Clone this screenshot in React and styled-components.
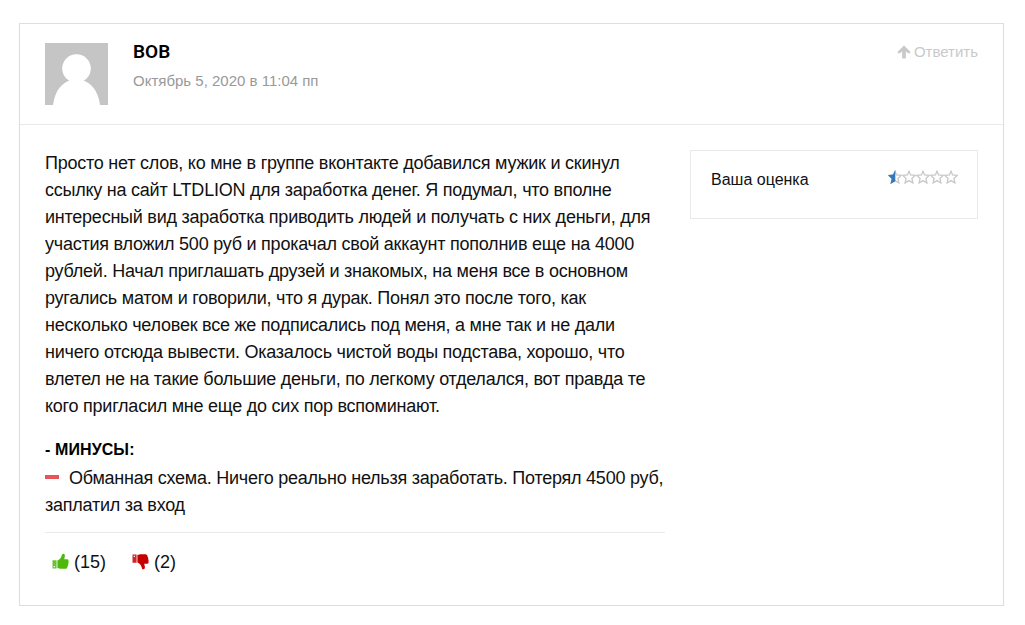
import React from 'react';
import styled, { createGlobalStyle } from 'styled-components';

const GlobalStyle = createGlobalStyle`
  * { box-sizing: border-box; }
  body { margin: 0; background: #fff; }
`;

const starPath = 'M7 1.3 L8.6 5 L13.2 5.4 L9.9 8.4 L10.9 13 L7 10.6 L3.1 13 L4.1 8.4 L0.8 5.4 L5.4 5 Z';

const Star = ({ half }) => (
  <svg width="14" height="15" viewBox="0 0 14 15">
    <path d={starPath} fill="none" stroke="#c8c8c8" strokeWidth="1.3" />
    {half && <path d="M7.3 0 V11.2 L2.5 14 L3.6 8.8 L0 5.2 L5 4.6 Z" fill="#3579bd" />}
  </svg>
);

const ArrowUp = () => (
  <svg width="14" height="14" viewBox="0 0 14 14" fill="currentColor">
    <path d="M7 0.4 L13.6 7 L12 8.7 L8.8 6.6 V13.6 H5.2 V6.6 L2 8.7 L0.4 7 Z" />
  </svg>
);

const Thumb = ({ down }) => (
  <svg width="17" height="17" viewBox="0 0 17 17" fill="currentColor">
    <g transform={down ? 'matrix(1 0 0 -1 0 17)' : undefined}>
      <path d="M0.5 7.2 H4.6 V15.5 H0.5 Z M1.7 12.9 V14.2 H3 V12.9 Z" fillRule="evenodd" opacity="0.85" />
      <path d="M5.4 7.6 C7.4 7 9 5.2 9.6 3.1 C9.9 1.7 10.1 0.8 11.3 0.8 C12.7 0.9 13.1 2.2 12.8 3.6 C12.7 4.7 12.3 5.5 12.2 6.2 H15.2 C16.5 6.2 16.9 7.3 16.4 8.4 C16.8 9.5 16.6 10.3 16.1 10.9 C16.4 12.1 16.1 12.8 15.5 13.2 C15.6 14.7 14.8 15.8 13.3 15.8 H9.7 C7.8 15.8 6.7 15.4 5.4 15.1 Z" />
    </g>
  </svg>
);

const lines = [
  'Просто нет слов, ко мне в группе вконтакте добавился мужик и скинул',
  'ссылку на сайт LTDLION для заработка денег. Я подумал, что вполне',
  'интересный вид заработка приводить людей и получать с них деньги, для',
  'участия вложил 500 руб и прокачал свой аккаунт пополнив еще на 4000',
  'рублей. Начал приглашать друзей и знакомых, на меня все в основном',
  'ругались матом и говорили, что я дурак. Понял это после того, как',
  'несколько человек все же подписались под меня, а мне так и не дали',
  'ничего отсюда вывести. Оказалось чистой воды подстава, хорошо, что',
  'влетел не на такие большие деньги, по легкому отделался, вот правда те',
  'кого пригласил мне еще до сих пор вспоминают.',
];

const App = () => (
  <Page>
    <GlobalStyle />
    <Card>
      <Header>
        <Avatar viewBox="0 0 63 62">
          <rect width="63" height="62" fill="#c5c5c5" />
          <circle cx="31.5" cy="25.5" r="14.3" fill="#fff" />
          <path d="M8 62 C10 47 17 40 26 37 H37 C46 40 53 47 55 62 Z" fill="#fff" />
        </Avatar>
        <Author>
          <Name>ВОВ</Name>
          <PostDate>Октябрь 5, 2020 в 11:04 пп</PostDate>
        </Author>
        <Reply><ArrowUp />Ответить</Reply>
      </Header>
      <Body>
        <Review>
          <Text>{lines.map(line => <Line key={line}>{line}</Line>)}</Text>
          <MinusTitle>- МИНУСЫ:</MinusTitle>
          <Text>
            <Line><Dash />Обманная схема. Ничего реально нельзя заработать. Потерял 4500 руб,</Line>
            <Line>заплатил за вход</Line>
          </Text>
          <Votes>
            <Vote $color="#4eb80c"><Thumb /><span>(15)</span></Vote>
            <Vote $color="#c60000"><Thumb down /><span>(2)</span></Vote>
          </Votes>
        </Review>
        <Rating>
          <span>Ваша оценка</span>
          <Stars>
            <Star half /><Star /><Star /><Star /><Star />
          </Stars>
        </Rating>
      </Body>
    </Card>
  </Page>
);

const Page = styled.div`
  padding: 23px 21px 0 19px;
  font-family: 'Liberation Sans', Arial, sans-serif;
  color: #111;
`;

const Card = styled.div`
  height: 583px;
  border: 1px solid #dedede;
  box-shadow: 0 1px 1px rgba(0, 0, 0, 0.05);
`;

const Header = styled.div`
  display: flex;
  height: 101px;
  padding: 19px 25px 0;
  border-bottom: 1px solid #e9e9e9;
`;

const Avatar = styled.svg`
  width: 63px;
  height: 62px;
`;

const Author = styled.div`
  margin-left: 25px;
`;

const Name = styled.div`
  font-family: Roboto, sans-serif;
  font-size: 19px;
  line-height: 18px;
  font-weight: 600;
  color: #000;
`;

const PostDate = styled.div`
  margin-top: 11px;
  font-size: 15px;
  line-height: 18px;
  color: #999;
`;

const Reply = styled.div`
  display: flex;
  align-items: flex-start;
  gap: 3px;
  margin-left: auto;
  font-size: 15px;
  line-height: 17px;
  color: #c9c9c9;

  svg {
    margin-top: 2px;
  }
`;

const Body = styled.div`
  display: flex;
  justify-content: space-between;
  align-items: flex-start;
  padding: 25px 25px 0;
`;

const Review = styled.div`
  width: 620px;
`;

const Text = styled.div`
  font-size: 18px;
  line-height: 27px;
  letter-spacing: -0.24px;
`;

const Line = styled.div`
  white-space: nowrap;
`;

const MinusTitle = styled.div`
  margin-top: 16px;
  padding-bottom: 2px;
  font-size: 16px;
  line-height: 27px;
  font-weight: 700;
  letter-spacing: 0.1px;
  color: #000;
`;

const Dash = styled.span`
  display: inline-block;
  width: 14px;
  height: 4px;
  margin-right: 10px;
  vertical-align: 5px;
  background: #e9545b;
`;

const Votes = styled.div`
  display: flex;
  gap: 26px;
  margin-top: 13px;
  padding: 16px 7px 0;
  border-top: 1px solid #e9e9e9;
`;

const Vote = styled.div`
  display: flex;
  align-items: flex-start;
  gap: 5px;
  font-size: 18px;
  line-height: 27px;

  svg {
    margin-top: 4px;
    color: ${props => props.$color};
  }
`;

const Rating = styled.div`
  display: flex;
  justify-content: space-between;
  width: 288px;
  height: 69px;
  padding: 19px 19px 0 20px;
  border: 1px solid #e9e9e9;
  font-size: 16px;
  line-height: 20px;
`;

const Stars = styled.div`
  display: flex;
`;

export default App;
